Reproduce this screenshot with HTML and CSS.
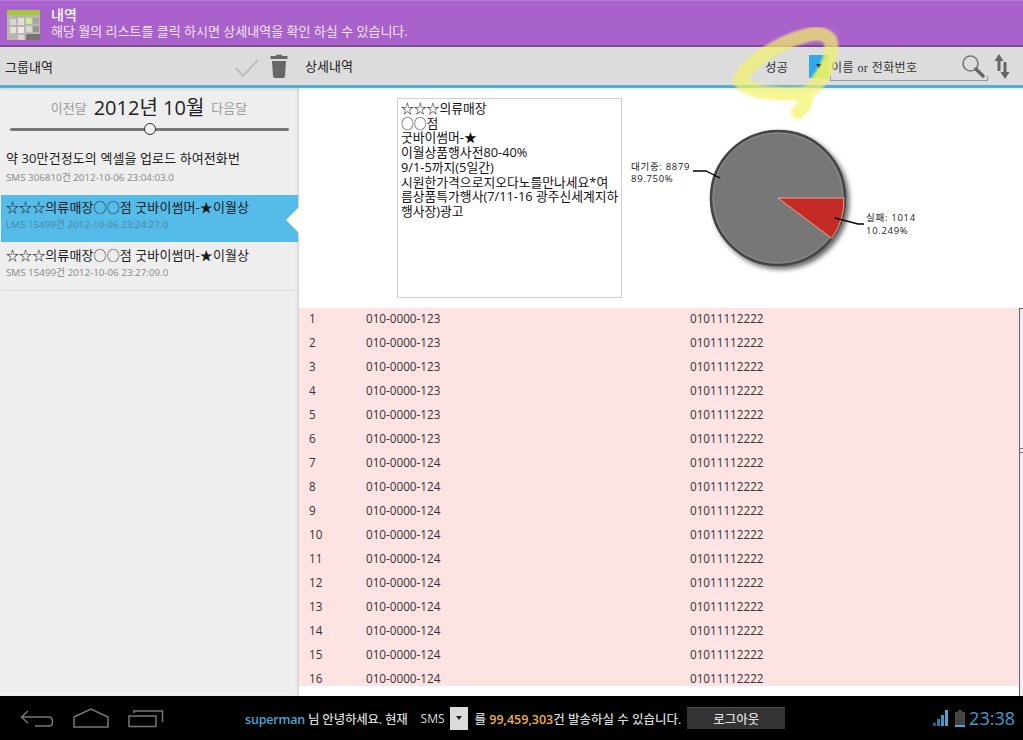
FILE: index.html
```html
<!DOCTYPE html>
<html>
	<head>
		<meta charset="UTF-8">
		<title>내역</title>
		<link rel="stylesheet" href="styles.css">
	</head>

	<body>

		<div class="app">

			<header class="header">
				<svg class="header-icon" width="34" height="30" viewBox="0 0 34 30">
					<rect x="0" y="0" width="33" height="5" fill="#a3c83c"/>
					<rect x="0" y="5" width="33" height="25" fill="#b9b5b0"/>
					<rect x="3" y="9" width="6" height="6" fill="#d8d5d0"/>
					<rect x="11" y="8" width="6" height="7" fill="#e2dfdb"/>
					<rect x="19" y="8" width="6" height="6" fill="#d0e89a"/>
					<rect x="26" y="8" width="6" height="6" fill="#a8a49f"/>
					<rect x="3" y="17" width="6" height="6" fill="#e4e1dd"/>
					<rect x="11" y="17" width="6" height="6" fill="#eeece9"/>
					<rect x="19" y="16" width="6" height="6" fill="#d8d5d0"/>
					<rect x="26" y="16" width="6" height="6" fill="#96928e"/>
					<rect x="11" y="25" width="6" height="5" fill="#d8d5d0"/>
					<rect x="19" y="24" width="14" height="6" fill="#77736f"/>
				</svg>
				<div class="header-text">
					<div class="header-title">내역</div>
					<div class="header-sub">해당 월의 리스트를 클릭 하시면 상세내역을 확인 하실 수 있습니다.</div>
				</div>
			</header>

			<div class="toolbar">
				<div class="toolbar-left">
					<span>그룹내역</span>
					<svg class="check-icon" width="24" height="20" viewBox="0 0 24 20">
						<path d="M1 10 L8 18 L23 2" fill="none" stroke="#bdbdbd" stroke-width="2"/>
					</svg>
					<svg class="trash-icon" width="18" height="24" viewBox="0 0 18 24">
						<path d="M6 2 V0.8 H12 V2 H17.5 V5 H0.5 V2 Z" fill="#666"/>
						<path d="M2 7 H16 L15 22 Q15 24 13 24 H5 Q3 24 3 22 Z" fill="#666"/>
					</svg>
				</div>
				<div class="toolbar-right">
					<span class="detail-title">상세내역</span>
					<span class="status">성공</span>
					<span class="status-select"><i class="caret"></i></span>
					<div class="search">
						<span>이름 <em>or</em> 전화번호</span>
						<svg class="search-icon" width="24" height="24" viewBox="0 0 24 24">
							<circle cx="9.5" cy="9.5" r="7.5" fill="none" stroke="#777" stroke-width="1.6"/>
							<path d="M15 15 L22 22" stroke="#666" stroke-width="3.4" stroke-linecap="round"/>
						</svg>
					</div>
					<svg class="sort-icon" width="16" height="25" viewBox="0 0 16 25">
						<path d="M5 0 L9.500 7 H6.500 V17 H3.500 V7 H0.500 Z" fill="#666"/>
						<path d="M11 25 L6.500 18 H9.500 V8 H12.500 V18 H15.500 Z" fill="#666"/>
					</svg>
				</div>
			</div>

			<div class="content">

				<aside class="sidebar">
					<div class="month">
						<span class="month-link">이전달</span>
						<span class="month-now">2012년 10월</span>
						<span class="month-link">다음달</span>
					</div>
					<div class="slider"><i class="thumb"></i></div>

					<div class="item first">
						<div class="item-title">약 30만건정도의 엑셀을 업로드 하여전화번</div>
						<div class="item-meta">SMS 306810건 2012-10-06 23:04:03.0</div>
					</div>
					<div class="item active">
						<div class="item-title">☆☆☆의류매장○○점 굿바이썸머-★이월상</div>
						<div class="item-meta">LMS 15499건 2012-10-06 23:24:27.0</div>
					</div>
					<div class="item last">
						<div class="item-title">☆☆☆의류매장○○점 굿바이썸머-★이월상</div>
						<div class="item-meta">SMS 15499건 2012-10-06 23:27:09.0</div>
					</div>
				</aside>

				<main class="main">
					<div class="summary">
						<div class="message">☆☆☆의류매장<br>○○점<br>굿바이썸머-★<br>이월상품행사전80-40%<br>9/1-5까지(5일간)<br>시원한가격으로지오다노를만나세요*여<br>름상품특가행사(7/11-16 광주신세계지하<br>행사장)광고</div>
						<svg class="chart" width="300" height="190" viewBox="0 0 300 190">
							<defs>
								<filter id="pie-shadow" x="-20%" y="-20%" width="140%" height="140%">
									<feDropShadow dx="3" dy="3" stdDeviation="2.500" flood-color="#000" flood-opacity="0.6"/>
								</filter>
							</defs>
							<circle cx="155" cy="100" r="67" fill="#777" stroke="#444" stroke-width="2.500" filter="url(#pie-shadow)"/>
							<circle cx="155" cy="100" r="65" fill="none" stroke="#8c8c8c" stroke-width="1"/>
							<path d="M155 100 H221 A66 66 0 0 1 208.700 140.300 Z" fill="#c42a26" stroke="#e8a58c" stroke-width="1"/>
							<path d="M70 73 H83 L97 80" fill="none" stroke="#000" stroke-width="1.300"/>
							<path d="M212 120 L235 126 H241" fill="none" stroke="#000" stroke-width="1.300"/>
							<text class="chart-label" x="8" y="72">대기중: 8879</text>
							<text class="chart-label" x="8" y="84">89.750%</text>
							<text class="chart-label" x="243" y="123">실패: 1014</text>
							<text class="chart-label" x="243" y="136">10.249%</text>
						</svg>
					</div>

					<div class="list">
						<div class="rows">
							<div class="row"><span>1</span><span>010-0000-123</span><span>01011112222</span></div>
							<div class="row"><span>2</span><span>010-0000-123</span><span>01011112222</span></div>
							<div class="row"><span>3</span><span>010-0000-123</span><span>01011112222</span></div>
							<div class="row"><span>4</span><span>010-0000-123</span><span>01011112222</span></div>
							<div class="row"><span>5</span><span>010-0000-123</span><span>01011112222</span></div>
							<div class="row"><span>6</span><span>010-0000-123</span><span>01011112222</span></div>
							<div class="row"><span>7</span><span>010-0000-124</span><span>01011112222</span></div>
							<div class="row"><span>8</span><span>010-0000-124</span><span>01011112222</span></div>
							<div class="row"><span>9</span><span>010-0000-124</span><span>01011112222</span></div>
							<div class="row"><span>10</span><span>010-0000-124</span><span>01011112222</span></div>
							<div class="row"><span>11</span><span>010-0000-124</span><span>01011112222</span></div>
							<div class="row"><span>12</span><span>010-0000-124</span><span>01011112222</span></div>
							<div class="row"><span>13</span><span>010-0000-124</span><span>01011112222</span></div>
							<div class="row"><span>14</span><span>010-0000-124</span><span>01011112222</span></div>
							<div class="row"><span>15</span><span>010-0000-124</span><span>01011112222</span></div>
							<div class="row"><span>16</span><span>010-0000-124</span><span>01011112222</span></div>
						</div>
						<div class="scrollbar"><i class="grip"></i></div>
					</div>
				</main>

			</div>

			<footer class="nav">
				<div class="nav-buttons">
					<svg width="34" height="20" viewBox="0 0 34 20">
						<path d="M32.500 14 Q32.500 9 29 9 H2 M8 3 L1.500 9 L8 15 M15 18 H29 Q32.500 18 32.500 14" fill="none" stroke="#777" stroke-width="1.500"/>
					</svg>
					<svg width="36" height="20" viewBox="0 0 36 20">
						<path d="M1 9 L18 1 L35 9 V19 H1 Z" fill="none" stroke="#777" stroke-width="1.500"/>
					</svg>
					<svg width="36" height="20" viewBox="0 0 36 20">
						<path d="M1 8 H28 V18.500 H1 Z M6 5 V3 H34.500 V14" fill="none" stroke="#777" stroke-width="1.500"/>
					</svg>
				</div>
				<div class="nav-info">
					<span class="hello greeting"><b class="user">superman</b> 님 안녕하세요. 현재</span>
					<span class="sms">SMS</span>
					<span class="sms-select"><i class="caret"></i></span>
					<span class="hello">를 <b class="count">99,459,303</b>건 발송하실 수 있습니다.</span>
					<span class="logout">로그아웃</span>
				</div>
				<div class="nav-status">
					<svg width="15" height="16" viewBox="0 0 15 16">
						<path d="M0 16 H3 V12.500 H0 Z" fill="#1d5f80"/>
						<path d="M4 16 H7 V9 H4 Z" fill="#2a7fa8"/>
						<path d="M8 16 H11 V5 H8 Z" fill="#3a9ac8"/>
						<path d="M12 16 H15 V0 H12 Z" fill="#44a8d8"/>
					</svg>
					<svg width="10" height="17" viewBox="0 0 10 17">
						<path d="M3 0 H7 V2 H10 V17 H0 V2 H3 Z" fill="#444"/>
						<path d="M0 15 H10 V17 H0 Z" fill="#44a8d8"/>
					</svg>
					<span class="clock">23:38</span>
				</div>
			</footer>

		</div>

		<svg class="marker" width="130" height="100" viewBox="0 0 130 100">
			<defs>
				<filter id="marker-soft"><feGaussianBlur stdDeviation="1"/></filter>
			</defs>
			<path d="M103 22 C106 8 92 4 76 9 C50 16 18 36 12 54 C22 66 50 68 76 66 C90 62 100 44 103 22 M78 66 C80 74 76 80 70 85" fill="none" stroke="#f4f26a" stroke-opacity="0.7" stroke-width="14" stroke-linecap="round" filter="url(#marker-soft)"/>
		</svg>

	</body>

</html>
```

FILE: styles.css
```css
* { margin: 0; padding: 0; box-sizing: border-box }

body {
	width: 1023px;
	height: 740px;
	overflow: hidden;
	position: relative;
	font-family: "Open Sans", "Noto Sans CJK KR", sans-serif;
	font-size: 13px;
	color: #222;
}

.app {
	height: 740px;
	display: flex;
	flex-direction: column;
}

/* top purple bar */
.header {
	height: 47px;
	flex: none;
	display: flex;
	align-items: center;
	padding: 0 0 0 7px;
	gap: 10px;
	background: #a962cc;
	border-top: 1px solid #b57ad4;
	border-bottom: 2px solid #7d4a96;
	color: #fff;
}

.header-icon { margin-top: 3px }
.header-title { font-size: 14px; line-height: 17px; font-weight: 500; margin-top: -1px }
.header-sub { font-size: 13px; line-height: 17px; color: #efe4f4 }

/* grey toolbar */
.toolbar {
	height: 41px;
	flex: none;
	display: flex;
	background: #dcdcdc;
	border-bottom: 3px solid #55add3;
	box-shadow: 0 2px 2px rgba(0, 0, 0, 0.08);
	position: relative;
}

.toolbar-left {
	width: 298px;
	flex: none;
	display: flex;
	align-items: center;
	padding-left: 5px;
}

.check-icon { margin-left: 182px; margin-top: 3px }
.trash-icon { margin-left: 11px }

.toolbar-right {
	flex: 1;
	display: flex;
	align-items: center;
	padding-left: 7px;
}

.detail-title { width: 460px; margin-top: -2px }
.status { width: 44px; color: #333; font-size: 12.500px }

.status-select {
	width: 20px;
	height: 23px;
	display: flex;
	align-items: center;
	justify-content: center;
	background: linear-gradient(125deg, #2fa8ec 45%, #a5e07c 55%);
}

.caret {
	width: 0;
	height: 0;
	border-left: 3.500px solid transparent;
	border-right: 3.500px solid transparent;
	border-top: 4px solid #222;
}

.search {
	width: 158px;
	height: 26px;
	margin-left: 1px;
	margin-top: 3px;
	padding: 0 3px 0 1px;
	display: flex;
	align-items: center;
	justify-content: space-between;
	border-bottom: 1px solid #8a9aa4;
	background:
		linear-gradient(#8a9aa4, #8a9aa4) left bottom / 1px 4px no-repeat,
		linear-gradient(#8a9aa4, #8a9aa4) right bottom / 1px 4px no-repeat;
	font-size: 12px;
}

.search span { color: #333; letter-spacing: 0.4px }
.search em { font-family: "Liberation Serif", serif; font-style: normal }
.search-icon { margin-bottom: 3px }
.sort-icon { margin-left: 6px }

/* body */
.content {
	flex: 1;
	min-height: 0;
	display: flex;
}

.sidebar {
	width: 299px;
	flex: none;
	background: #eeeeee;
	border-right: 1px solid #d4d4d4;
	box-shadow: inset -2px 0 2px rgba(0, 0, 0, 0.04);
	padding-top: 6px;
}

.month {
	height: 26px;
	display: flex;
	align-items: center;
	justify-content: center;
	gap: 7px;
}

.month-link { color: #9c9c9c; font-size: 13px }
.month-now { font-size: 20px; color: #222; margin-top: -2px }

.slider {
	height: 3px;
	margin: 8px 9px 0 10px;
	background: #777;
	border-radius: 2px;
	position: relative;
}

.thumb {
	width: 12px;
	height: 12px;
	position: absolute;
	top: -5px;
	left: 134px;
	border-radius: 50%;
	background: #f2f2f2;
	border: 1px solid #333;
}

.item {
	margin-left: 1px;
	padding-left: 5px;
	position: relative;
}

.item.first {
	height: 48px;
	margin-top: 16px;
	padding-top: 3px;
}

.item.active {
	height: 47px;
	padding-top: 4px;
	background: #55bbe8;
}

.item.active::after {
	content: "";
	position: absolute;
	right: -1px;
	top: 12px;
	border-top: 13px solid transparent;
	border-bottom: 13px solid transparent;
	border-right: 13px solid #fff;
}

.item.last {
	height: 49px;
	padding-top: 5px;
	border-bottom: 1px solid #dcdcdc;
}

.item-title { font-size: 13px; line-height: 17px; color: #1a1a1a; white-space: nowrap; letter-spacing: 0.1px }
.item-meta { font-size: 9.800px; line-height: 14px; margin-top: 2px; color: #888 }
.item.first .item-meta { margin-top: 4px }
.item.active .item-meta { color: #4f87a3 }

.main {
	flex: 1;
	min-width: 0;
	background: #fff;
	display: flex;
	flex-direction: column;
}

.summary {
	height: 220px;
	flex: none;
	display: flex;
	padding: 10px 0 0 98px;
}

.message {
	width: 225px;
	height: 200px;
	border: 1px solid #d0d0d0;
	padding: 2px 0 0 3px;
	font-size: 12.800px;
	line-height: 14.700px;
	color: #111;
	white-space: nowrap;
}

.chart { margin-left: 1px }

.chart-label {
	font-size: 9.500px;
	letter-spacing: 0.7px;
	fill: #222;
}

.list { display: flex; flex: 1; min-height: 0 }

.rows {
	width: 720px;
	height: 378px;
	flex: none;
	overflow: hidden;
}

.row {
	height: 24px;
	display: grid;
	grid-template-columns: 57px 324px 1fr;
	align-items: start;
	padding-left: 10px;
	background: #fde3e3;
	color: #333;
	font-size: 11.700px;
	line-height: 20px;
}

.scrollbar {
	width: 4px;
	border-left: 1px solid #666;
	border-top: 1px solid #666;
	background: #f1eff3;
	height: 100%;
	position: relative;
}

.grip {
	position: absolute;
	left: 0;
	top: 139px;
	width: 4px;
	height: 5px;
	border-top: 1px solid #777;
	border-bottom: 1px solid #777;
}

/* bottom android bar */
.nav {
	height: 44px;
	flex: none;
	display: flex;
	align-items: center;
	background: #000;
	color: #d8d8d8;
}

.nav-buttons {
	width: 245px;
	flex: none;
	display: flex;
	align-items: center;
	gap: 19px;
	padding-left: 20px;
}

.nav-info {
	display: flex;
	align-items: center;
	font-size: 12.500px;
	font-weight: 500;
}

.hello { white-space: nowrap }
.greeting { letter-spacing: -0.2px }
.hello b { font-weight: 600 }
.user { color: #4aa6d6 }
.count { color: #f0b040 }

.sms { margin-left: 13px; color: #ddd; font-size: 12px }

.sms-select {
	width: 18px;
	height: 23px;
	margin: 0 7px 0 5px;
	display: flex;
	align-items: center;
	justify-content: center;
	background: #dcdcdc;
}

.logout {
	width: 98px;
	height: 22px;
	margin-left: 6px;
	display: flex;
	align-items: center;
	justify-content: center;
	background: #333;
	border-top: 1px solid #4a4a4a;
	color: #ddd;
}

.nav-status {
	margin-left: auto;
	padding-right: 8px;
	display: flex;
	align-items: center;
	gap: 7px;
}

.clock { font-size: 18px; color: #3f9fd0; margin-left: -3px }

/* highlighter scribble drawn over the screenshot */
.marker {
	position: absolute;
	left: 728px;
	top: 27px;
	pointer-events: none;
}
```
